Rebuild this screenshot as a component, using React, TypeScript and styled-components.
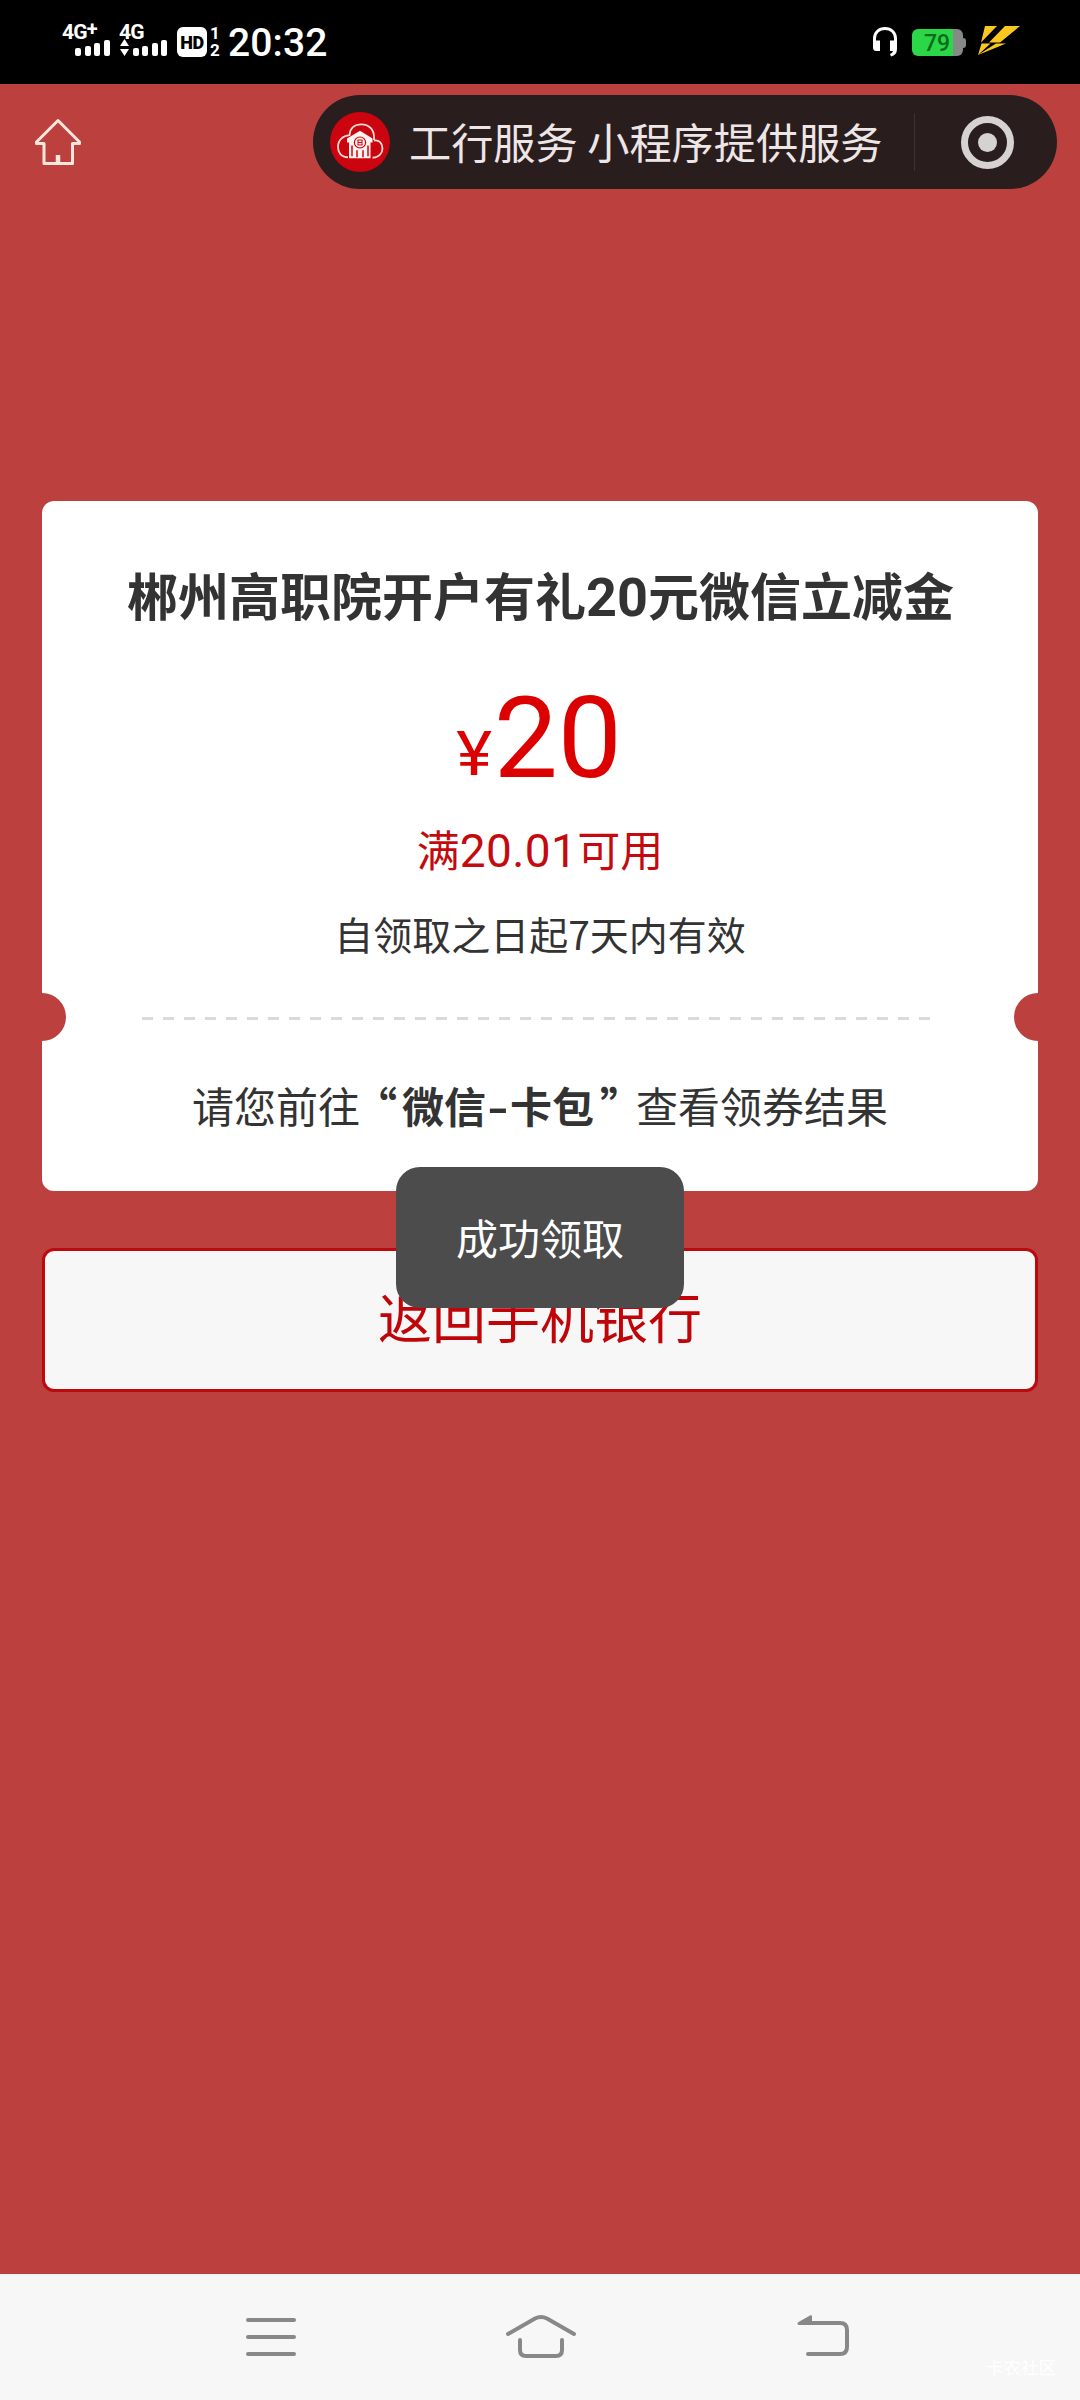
import React from 'react';
import styled, { createGlobalStyle } from 'styled-components';

const GlobalStyle = createGlobalStyle`
  body {
    margin: 0;
    background: #bc403e;
    font-family: "Noto Sans CJK SC", "Noto Sans", sans-serif;
  }
  * { box-sizing: border-box; }
`;

const Screen = styled.div`
  position: relative;
  display: flex;
  flex-direction: column;
  width: 1080px;
  height: 2400px;
  overflow: hidden;
  background: #bc403e;
`;

const StatusBar = styled.div`
  display: flex;
  justify-content: space-between;
  height: 84px;
  padding: 25px 60px 0 62px;
  background: #000;
  color: #fff;
  font-family: Roboto, sans-serif;
`;

const StatusGroup = styled.div`
  display: flex;
  align-items: flex-start;
`;

const Signal = styled.div<{ $width: number }>`
  display: flex;
  flex-direction: column;
  width: ${(p) => p.$width}px;
`;

const Network = styled.span`
  font-size: 21px;
  font-weight: 700;
  line-height: 15px;
  letter-spacing: -0.8px;
`;

const Plus = styled.span`
  display: inline-block;
  font-size: 20px;
  transform: translateY(-3px);
`;

const BarRow = styled.div<{ $indent: number }>`
  display: flex;
  align-items: flex-end;
  gap: 3.6px;
  height: 16px;
  padding-left: ${(p) => p.$indent}px;
`;

const Bar = styled.i<{ $h: number }>`
  width: 6px;
  height: ${(p) => p.$h}px;
  border-radius: 2px;
  background: #fff;
`;

const HdBadge = styled.div`
  width: 30px;
  height: 30px;
  margin-top: 2px;
  border-radius: 6px;
  background: #fff;
  color: #000;
  font-size: 18px;
  font-weight: 900;
  line-height: 31px;
  text-align: center;
  letter-spacing: -0.5px;
`;

const SimStack = styled.div`
  display: flex;
  flex-direction: column;
  gap: 2px;
  width: 12px;
  margin: 1px 0 0 2px;
  font-size: 17px;
  font-weight: 700;
  line-height: 15px;
  text-align: center;
`;

const Clock = styled.div`
  margin: -1px 0 0 7px;
  font-size: 39px;
  font-weight: 500;
  line-height: 39px;
  letter-spacing: 0.1px;
`;

const Battery = styled.div`
  display: flex;
  align-items: center;
  margin: 4px 12px 0 15px;
`;

const BatteryBody = styled.div`
  width: 51px;
  height: 27px;
  border-radius: 6px;
  background: linear-gradient(90deg, #2bd746 0 41px, #868a87 41px);
  color: #0a6b1c;
  font-size: 23px;
  font-weight: 500;
  line-height: 29px;
  padding-left: 12px;
`;

const BatteryTip = styled.i`
  width: 3px;
  height: 10px;
  border-radius: 0 3px 3px 0;
  background: #868a87;
`;

const Header = styled.header`
  display: flex;
  align-items: flex-start;
  justify-content: space-between;
  height: 417px;
  padding: 11px 23px 0 33px;
`;

const HomeLink = styled.div`
  display: flex;
  margin-top: 22px;
`;

const Capsule = styled.div`
  display: flex;
  align-items: center;
  width: 744px;
  height: 94px;
  padding-left: 17px;
  border-radius: 47px;
  background: #2a1d1e;
`;

const CapsuleText = styled.span`
  width: 524px;
  padding-left: 19px;
  color: #eee6e6;
  font-size: 42.2px;
  line-height: 60px;
  white-space: nowrap;
  margin-top: -2px;
`;

const CapsuleDivider = styled.i`
  width: 1px;
  height: 58px;
  margin-right: 46px;
  background: #40302f;
`;

const TargetButton = styled.div`
  display: grid;
  place-items: center;
  width: 53px;
  height: 53px;
  border: 7px solid #d6d2d2;
  border-radius: 50%;

  &::after {
    content: '';
    width: 19px;
    height: 19px;
    border-radius: 50%;
    background: #d6d2d2;
  }
`;

const Content = styled.main`
  display: flex;
  flex-direction: column;
  flex: 1;
  gap: 57px;
  padding: 0 42px;
`;

const Card = styled.section`
  display: flex;
  flex-direction: column;
  align-items: center;
  height: 690px;
  padding-top: 61px;
  border-radius: 12px;
  background: #fff;
  color: #333;
  white-space: nowrap;
`;

const Title = styled.h1`
  margin: 0;
  padding-left: 1px;
  font-size: 51px;
  font-weight: 700;
  line-height: 64px;
`;

const TitleDigits = styled.span`
  font-family: Roboto, sans-serif;
  font-size: 54px;
  line-height: 1;
`;

const Amount = styled.div`
  display: flex;
  align-items: baseline;
  height: 100px;
  margin-top: 62px;
  color: #dc0000;
  font-family: Roboto, sans-serif;
  font-size: 114px;
  line-height: 100px;
`;

const Yen = styled.span`
  margin-right: 3px;
  font-size: 62px;
  line-height: 1;
  transform: translateY(-2px) scaleX(1.1);
`;

const Condition = styled.div`
  margin-top: 30px;
  color: #c40a0e;
  font-size: 43px;
  line-height: 60px;
`;

const ConditionDigits = styled.span`
  font-family: Roboto, sans-serif;
  font-size: 46px;
  line-height: 1;
  letter-spacing: 0.4px;
`;

const Validity = styled.div`
  margin-top: 27px;
  font-size: 39px;
  line-height: 56px;
`;

const TearLine = styled.div`
  display: flex;
  align-items: center;
  justify-content: space-between;
  align-self: stretch;
  height: 48px;
  margin-top: 32px;
`;

const Notch = styled.i<{ $side: 'left' | 'right' }>`
  width: 24px;
  height: 48px;
  border-radius: ${(p) => (p.$side === 'left' ? '0 24px 24px 0' : '24px 0 0 24px')};
  background: #bc403e;
`;

const Dashes = styled.i`
  width: 788px;
  height: 3px;
  margin: 3px 8px 0 0;
  background: repeating-linear-gradient(90deg, #dadada 0 11px, transparent 11px 21px);
`;

const Guide = styled.p`
  margin: 34px 0 0;
  font-size: 42px;
  line-height: 60px;

  b { font-weight: 700; }
`;

const Quote = styled.span<{ $before: number; $after: number }>`
  margin: 0 ${(p) => p.$after}px 0 ${(p) => p.$before}px;
  font-feature-settings: "halt";
`;

const Hyphen = styled.span`
  display: inline-block;
  width: 24px;
  text-align: center;
  transform: scaleX(1.4);
`;

const BackButton = styled.button`
  height: 144px;
  padding: 0 0 8px;
  border: 3px solid #bb090e;
  border-radius: 12px;
  background: #f7f7f7;
  color: #c00509;
  font-family: inherit;
  font-size: 54px;
  line-height: 80px;
`;

const Toast = styled.div`
  position: absolute;
  top: 1167px;
  left: 396px;
  width: 288px;
  height: 141px;
  border-radius: 24px;
  background: #4c4c4c;
  color: #fff;
  font-size: 42px;
  line-height: 139px;
  text-align: center;
`;

const NavBar = styled.nav`
  display: flex;
  align-items: flex-start;
  height: 126px;
  padding: 38px 0 0 244px;
  background: #f7f7f7;

  svg { flex: none; }
`;

const NavGap = styled.i<{ $w: number }>`
  width: ${(p) => p.$w}px;
`;

const Watermark = styled.span`
  margin: 42px 0 0 134px;
  color: #fff;
  font-size: 17.5px;
  line-height: 26px;
  white-space: nowrap;
`;

const SIGNAL_LEVELS = [8, 10.5, 13, 16];

function Bars() {
  return (
    <>
      {SIGNAL_LEVELS.map((h) => (
        <Bar key={h} $h={h} />
      ))}
    </>
  );
}

function BankLogo() {
  return (
    <svg width="60" height="60" viewBox="0 0 60 61" preserveAspectRatio="none">
      <ellipse cx="30" cy="30.5" rx="30" ry="30.5" fill="#cb0410" />
      <g fill="none" stroke="#ffdcd3" strokeWidth="1.8">
        <path d="M18 46C11 46 8 41 8 35.500c0-7 5-11.500 11.500-12C20 16 25 12.500 31.500 12.500c7.500 0 12.500 5.500 12.500 13v3" />
        <path d="M44 29c5-1 8.500 3 8.500 8 0 5-4 9.500-10 9.500" />
      </g>
      <path d="M30 19l12.500 8v4h-2v16H19V31h-2v-4z" fill="#fff3f0" />
      <path d="M22 34v11M38 34v11M27 39v7M33 39v7" stroke="#cb0410" strokeWidth="1.5" />
      <circle cx="30" cy="31" r="5.600" fill="#fff3f0" stroke="#cb0410" strokeWidth="1.2" />
      <path d="M27.500 28.500h5M27.500 33.500h5M28 31h4M28 28.500v5M32 28.500v5" stroke="#cb0410" strokeWidth="1" fill="none" />
    </svg>
  );
}

export default function App() {
  return (
    <Screen>
      <GlobalStyle />
      <StatusBar>
        <StatusGroup>
          <Signal $width={57}>
            <Network>4G<Plus>+</Plus></Network>
            <BarRow $indent={13}><Bars /></BarRow>
          </Signal>
          <Signal $width={58}>
            <Network>4G</Network>
            <BarRow $indent={1}>
              <svg width="9" height="17" viewBox="0 0 9 17">
                <path d="M4.500 0L9 7H0zM4.500 17L0 10h9z" fill="#fff" />
              </svg>
              <Bars />
            </BarRow>
          </Signal>
          <HdBadge>HD</HdBadge>
          <SimStack><span>1</span><span>2</span></SimStack>
          <Clock>20:32</Clock>
        </StatusGroup>
        <StatusGroup>
          <svg width="24" height="32" viewBox="0 -2 24 32">
            <path d="M1.500 16v-4.500C1.500 5.500 6 1.500 12 1.500s10.500 4 10.500 10V16" fill="none" stroke="#fff" strokeWidth="3" />
            <path d="M0 13.500h7V24H3.500Q0 24 0 20.500zM17 13.500h7V22q0 6-6 7.500l-1-2.500q2.500-1 3-3h-3z" fill="#fff" />
          </svg>
          <Battery>
            <BatteryBody>79</BatteryBody>
            <BatteryTip />
          </Battery>
          <svg width="42" height="31" viewBox="0 0 42 31">
            <path d="M7 1h12L3 17.500zM27 1h15L22 17.500H11zM3.500 18.500h9L0 30zM18 18.500h10L0 30z" fill="#f8c820" />
          </svg>
        </StatusGroup>
      </StatusBar>

      <Header>
        <HomeLink>
          <svg width="50" height="50" viewBox="0 0 50 50">
            <path d="M25 3.500L3.500 25v1.500h7.500V46.500h28.500V26.500h7V25z" fill="none" stroke="#fde7dc" strokeWidth="3" strokeLinejoin="round" />
            <path d="M25 38v9" stroke="#fde7dc" strokeWidth="4.500" />
          </svg>
        </HomeLink>
        <Capsule>
          <BankLogo />
          <CapsuleText>工行服务 小程序提供服务</CapsuleText>
          <CapsuleDivider />
          <TargetButton />
        </Capsule>
      </Header>

      <Content>
        <Card>
          <Title>郴州高职院开户有礼<TitleDigits>20</TitleDigits>元微信立减金</Title>
          <Amount><Yen>¥</Yen>20</Amount>
          <Condition>满<ConditionDigits>20.01</ConditionDigits>可用</Condition>
          <Validity>自领取之日起7天内有效</Validity>
          <TearLine>
            <Notch $side="left" />
            <Dashes />
            <Notch $side="right" />
          </TearLine>
          <Guide>
            请您前往
            <b>
              <Quote $before={16} $after={5}>“</Quote>微信<Hyphen>-</Hyphen>卡包<Quote $before={6} $after={15}>”</Quote>
            </b>
            查看领券结果
          </Guide>
        </Card>
        <BackButton>返回手机银行</BackButton>
      </Content>

      <Toast>成功领取</Toast>

      <NavBar>
        <svg width="54" height="48" viewBox="0 0 54 48">
          <path d="M4 8h46M4 25h46M4 42h46" stroke="#888" strokeWidth="4" strokeLinecap="round" />
        </svg>
        <NavGap $w={206} />
        <svg width="74" height="48" viewBox="0 0 74 48" fill="none" stroke="#888" strokeWidth="4" strokeLinecap="round">
          <path d="M4 22L31 6.500q6-3 12 0L70 22M16 28v10q0 6 6 6h30q6 0 6-6V28" />
        </svg>
        <NavGap $w={216} />
        <svg width="58" height="48" viewBox="0 0 58 48">
          <path d="M8 11h38q7 0 7 7v17q0 7-7 7H14" fill="none" stroke="#888" strokeWidth="4" strokeLinecap="round" />
          <path d="M18 4v9H5q-3-1-.500-3L17 3z" fill="#888" />
        </svg>
        <Watermark>卡农社区</Watermark>
      </NavBar>
    </Screen>
  );
}
